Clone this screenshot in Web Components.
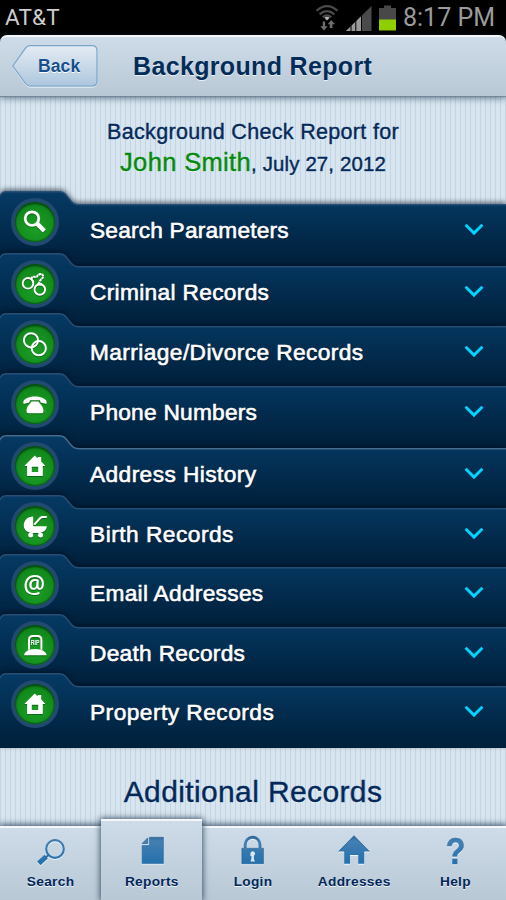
<!DOCTYPE html>
<html lang="en">
<head>
<meta charset="utf-8">
<title>Background Report</title>
<style>
    html, body {
        margin: 0;
        height: 100%;
        background: #000;
        overflow: hidden;
        font-family: "Liberation Sans", Arial, sans-serif;
    }
</style>
</head>
<body>
<report-app></report-app>

<script>
/* icons of the round green badges, 30x30 */
const badgeIcons = {
    search: `<circle cx="12" cy="11.6" r="6.800" fill="none" stroke="#fff" stroke-width="2.800"/>
        <path d="M16.800 16.400 24.300 24" stroke="#fff" stroke-width="4.400"/>`,
    cuffs: `<g transform="translate(0 -2.300)"><g fill="none" stroke="#fff"><circle cx="8" cy="16.600" r="5.300" stroke-width="1.900"/>
        <circle cx="19.800" cy="22.800" r="5.300" stroke-width="1.900"/>
        <path d="M11.300 12.500 C12.500 8 16 11.500 17 9.800 S20.500 6.200 22.800 8.500 C24.600 11.400 19.500 12.400 19 16.800" stroke-width="2.100" stroke-dasharray="2.600 .5"/></g>
        <path d="M11 12.200l3.400 2.200-1.600 2.600zM17.300 16.300h4.600l.6 2.400h-5z" fill="#fff"/></g>`,
    rings: `<g fill="none" stroke="#fff" stroke-width="2"><circle cx="11" cy="11.300" r="7.100"/><circle cx="18.800" cy="19.200" r="7.100"/></g>`,
    phone: `<path fill="#fff" d="M15 7.400c5.500 0 9.600 1.600 11.200 4.200.6 1 .6 2.500.2 3.300l-5.800-1.300c-.4-.8-.3-1.700-.7-2.300H10.100c-.4.6-.3 1.500-.7 2.300l-5.800 1.300c-.4-.8-.4-2.300.2-3.300C5.400 9 9.500 7.400 15 7.400z"/>
        <path fill="#fff" d="M11.400 12.500h7.200c.4 2 4.900 4.200 4.900 9.200 0 1.700-.6 2.500-1.500 2.500H8c-.9 0-1.500-.8-1.500-2.500 0-5 4.500-7.200 4.900-9.200z"/>`,
    home: `<path fill="#fff" fill-rule="evenodd" d="M14.800 4.600 17.700 7.300V5.900h3.500v4.600l3.800 3.900v.6h-2.200v9.900H7.100V15H4.700v-.6zM11.800 15.800v5.200h6.400v-5.200z"/>`,
    pram: `<g fill="#fff"><path d="M13.200 5.500v9.700H26.800c-.1 4.400-4 6.800-9.300 6.800h-4.200c-6 0-9.500-3.200-9.500-7.600 0-5.100 3.800-8.700 9.400-8.900z"/>
        <circle cx="10.700" cy="23.900" r="2.500"/><circle cx="20.500" cy="23.900" r="2.500"/></g>
        <path d="M14.300 13.600 20 7.300q1.300-1.200 3-1.200h3.800" fill="none" stroke="#fff" stroke-width="2"/>`,
    at: `<text x="14.200" y="22.800" text-anchor="middle" fill="#fff" font-size="24.500" font-weight="600" font-family="Open Sans, sans-serif">@</text>`,
    grave: `<path d="M9 19.800V10q0-4 4-4h4.400q4 0 4 4v9.800" fill="none" stroke="#fff" stroke-width="2"/>
        <path fill="#fff" d="M4 25.200c.6-3 3.400-4.800 6.400-5.600q4.600-1.400 9.400 0c3 .8 6.300 2.600 6.900 5.600z"/>
        <text x="15.200" y="15.200" text-anchor="middle" fill="#fff" font-size="6.500" font-weight="bold" font-family="Liberation Sans, sans-serif" textLength="8.800" lengthAdjust="spacingAndGlyphs">RIP</text>`
};

/* icons of the bottom bar, 34x32 */
const navIcons = {
    search: `<circle cx="21" cy="14" r="8.800" fill="none" stroke="url(#blue)" stroke-width="2.200"/>
        <path d="M12.200 21.700 4.800 28.300" stroke="url(#blue)" stroke-width="5"/><path d="M15 19.700 11 23" stroke="#2a6ba3" stroke-width="1.800"/>`,
    reports: `<path fill="url(#blue)" stroke="#225f95" stroke-width=".6" d="M14.500 2.300H28.400V28.600H7.100V10.600H14.500z"/>
        <path fill="#4780af" stroke="#1d527f" stroke-width=".6" d="M12.700 2.900V8.700H7z"/>`,
    login: `<path d="M9.200 13V9.800a7.400 7.600 0 0 1 14.800 0V13" fill="none" stroke="url(#blue)" stroke-width="3"/>
        <path fill="url(#blue)" stroke="#1d527f" stroke-width=".5" d="M5.800 13.300H27.500V28.800H5.800z"/>
        <path fill="#dbe6ef" d="M16.600 16.200a2.500 2.500 0 0 1 1.300 4.600v3.200l1.100 2.500h-4.600l1-2.500v-3h-1v-2.300a2.500 2.500 0 0 1 2.200-2.500z"/>`,
    addresses: `<path fill="url(#blue)" d="M17 .8 32.300 16.400H27.200V28.800H21.200V20H13V28.800H7.200V16.400H1.700z"/>
        <path d="M1.700 16.400 17 .8 32.300 16.400" fill="none" stroke="#225f95" stroke-width=".8"/>`,
    help: `<text x="17.500" y="28.800" text-anchor="middle" fill="url(#blue)" stroke="url(#blue)" stroke-width=".5" font-size="36.500" font-weight="bold" font-family="Liberation Sans, sans-serif" textLength="20" lengthAdjust="spacingAndGlyphs">?</text>`
};

class StatusBar extends HTMLElement {
    constructor(){
        super()
        this.attachShadow({mode: 'open'})
    }

    connectedCallback(){
        this.render();
    }

    style(){
        return /*css*/`
        :host {
            display: flex;
            justify-content: space-between;
            align-items: center;
            height: 35px;
            padding: 0 11px 0 5px;
            box-sizing: border-box;
            background: #000;
            font-family: Roboto, sans-serif;
        }
        .carrier {
            color: #cdcdcd;
            font-size: 22.500px;
            line-height: 35px;
            letter-spacing: .2px;
        }
        .right {
            display: flex;
            align-items: center;
            color: #9b9b9b;
            font-size: 25px;
        }
        svg {
            width: 84px;
            height: 30px;
            margin-right: 4px;
        }
        `
    }

    render(){
        this.shadowRoot.innerHTML = /*html*/`
        <style>${this.style()}</style>
        <span class="carrier">AT&amp;T</span>
        <div class="right">
            <svg viewBox="0 0 84 30">
                <g fill="none" stroke="#4c4c4c" stroke-width="2.200">
                    <path d="M1.500 7.800Q12-1.500 22.500 7.800"/>
                    <path d="M4.600 11.300Q12 5 19.400 11.300"/>
                    <path d="M7.700 14.200Q12 10.500 16.300 14.200"/>
                </g>
                <path d="M12 17.400 9.300 14.800Q12 12.800 14.700 14.800z" fill="#b5b5b5"/>
                <path d="M7.800 18.500v4.700H5.300l3.700 4.300 3.600-4.300h-2.500v-4.700zM14.800 25v-3.800h-2.100l3.500-4.200 3.700 4.200h-2.500V25z" fill="#6f6f6f"/>
                <path d="M31 28 56.500 3V28z" fill="#4a4a4a"/>
                <path d="M31 28 46.200 13.200V28z" fill="#9b9b9b"/>
                <path d="M36 28V20M40.800 28V16M46.500 28V11" stroke="#000" stroke-width="1"/>
                <path d="M64 5h5V2.500h7V5h5v12H64z" fill="#484848"/>
                <path d="M64 16.500h17V27.500H64z" fill="#8fcf00"/>
            </svg>
            <span>8:17 PM</span>
        </div>
        `
    }
}

class TitleBar extends HTMLElement {
    constructor(){
        super()
        this.attachShadow({mode: 'open'})
    }

    connectedCallback(){
        this.render();
    }

    style(){
        return /*css*/`
        :host {
            display: grid;
            grid-template-columns: 86px auto;
            justify-content: start;
            align-items: center;
            column-gap: 35px;
            height: 61px;
            box-sizing: border-box;
            padding-left: 12px;
            border-top: 2px solid #f4f8fb;
            border-radius: 7px 7px 0 0;
            background: linear-gradient(#cddce8, #b9c8d5);
            box-shadow: 0 1px 1px #6f8799, 0 2px 7px rgba(30, 60, 85, .65);
            position: relative;
            z-index: 2;
        }
        .back {
            display: grid;
            height: 43px;
            margin-top: -1px;
        }
        .back svg, .back span {
            grid-area: 1 / 1;
        }
        .back span {
            align-self: center;
            padding-left: 26px;
            color: #174f8c;
            font-size: 17.500px;
            font-weight: bold;
            letter-spacing: .1px;
            text-shadow: 0 1px 0 #fff;
        }
        h1 {
            margin: 0;
            color: #032c59;
            font-size: 25px;
            letter-spacing: .34px;
            line-height: 30px;
            margin-top: -1px;
            text-shadow: 0 1px 0 rgba(255, 255, 255, .7);
        }
        `
    }

    render(){
        this.shadowRoot.innerHTML = /*html*/`
        <style>${this.style()}</style>
        <div class="back">
            <svg width="86" height="43" viewBox="0 0 86 43">
                <defs><linearGradient id="g" x2="0" y2="1"><stop stop-color="#e4ebf3"/><stop offset="1" stop-color="#adc7de"/></linearGradient></defs>
                <path d="M1 22.200 13.500 4.200Q15.500 1.700 18 1.700H80Q85 1.700 85 6.700V37.200Q85 42.200 80 42.200H18Q15.500 42.200 13.500 39.700z" fill="none" stroke="#e9f1f7"/>
                <path d="M.8 21 13.500 3.200Q15.500.7 18 .7H80Q85 .7 85 5.700V36Q85 41 80 41H18Q15.500 41 13.500 38.500z" fill="url(#g)" stroke="#78a5cb" stroke-width="1.200"/>
            </svg>
            <span>Back</span>
        </div>
        <h1><slot></slot></h1>
        `
    }
}

class FolderRow extends HTMLElement {
    constructor(){
        super()
        this.attachShadow({mode: 'open'})
    }

    connectedCallback(){
        this.render();
    }

    style(h){
        return /*css*/`
        :host {
            display: grid;
            height: ${h}px;
            margin-bottom: -13px;
            isolation: isolate;
        }
        :host(:last-of-type) {
            margin-bottom: 0;
        }
        .shape, .content {
            grid-area: 1 / 1;
            min-width: 0;
        }
        .shape {
            width: 506px;
            height: ${h}px;
            filter: drop-shadow(0 -2px 2.5px rgba(0, 12, 30, .55));
        }
        .content {
            display: grid;
            grid-template-columns: 48px 1fr 20px;
            column-gap: 31px;
            padding: 6px 22px 0 11px;
            align-items: start;
            z-index: 1;
        }
        .badge {
            display: grid;
            place-items: center;
            width: 48px;
            height: 48px;
            margin-top: .7px;
            border-radius: 50%;
            background: #224a70;
        }
        .disc {
            display: grid;
            place-items: center;
            width: 40px;
            height: 40px;
            border-radius: 50%;
            background: radial-gradient(circle at 50% 65%, #1b9f25, #0d7d18);
            box-shadow: inset 0 2px 2px #064a14, inset 0 0 1px 1px #075c17;
        }
        .disc svg {
            overflow: visible;
            filter: drop-shadow(0 1px .5px rgba(0, 60, 10, .5));
        }
        .label {
            color: #fff;
            font-size: 22.700px;
            line-height: 26px;
            letter-spacing: ${this.getAttribute('tracking') || .2}px;
            padding-top: 20px;
            -webkit-text-stroke: .6px #fff;
            white-space: nowrap;
            text-shadow: 0 1px 1px #001428;
        }
        .arrow {
            margin-top: 25px;
        }
        `
    }

    render(){
        const h = +this.getAttribute('height');
        const edge = 'M-2 14 V10 Q0 .8 6 .8 H59 Q64 .8 67 5 L71 10 Q74 13.800 79 13.800 H508';
        this.shadowRoot.innerHTML = /*html*/`
        <style>${this.style(h)}</style>
        <svg class="shape" viewBox="0 0 506 ${h}">
            <defs><linearGradient id="g" gradientUnits="userSpaceOnUse" x1="0" y1="0" x2="0" y2="${h}">
                <stop stop-color="#063a64"/><stop offset=".25" stop-color="#04345b"/><stop offset=".8" stop-color="#012442"/><stop offset="1" stop-color="#00203a"/>
            </linearGradient></defs>
            <path d="${edge} V100 H-2z" fill="url(#g)"/>
            <path d="${edge}" fill="none" stroke="${this.getAttribute('line') || '#264f75'}" stroke-width="1.400"/>
        </svg>
        <div class="content">
            <div class="badge"><div class="disc">
                <svg width="30" height="30" viewBox="0 0 30 30">${badgeIcons[this.getAttribute('icon')]}</svg>
            </div></div>
            <span class="label"><slot></slot></span>
            <svg class="arrow" width="20" height="14" viewBox="0 0 20 14"><path d="M1.600 2.800 10 11.100 18.400 2.800" fill="none" stroke="#00d4ff" stroke-width="2.900"/></svg>
        </div>
        `
    }
}

class NavTab extends HTMLElement {
    constructor(){
        super()
        this.attachShadow({mode: 'open'})
    }

    connectedCallback(){
        this.render();
    }

    style(){
        return /*css*/`
        :host {
            display: flex;
            flex-direction: column;
            align-items: center;
            justify-content: flex-end;
            flex: 1 1 0;
            height: 72px;
            box-sizing: border-box;
            padding-bottom: 10px;
            color: #02285a;
        }
        :host([active]) {
            height: 81px;
            border-top: 2px solid #f4f8fb;
            background: linear-gradient(#cddce8, #b9c8d5);
            box-shadow: 0 0 6px 1px rgba(20, 45, 70, .75);
        }
        svg {
            filter: drop-shadow(0 1px 0 #eef4f9);
            overflow: visible;
        }
        span {
            font-size: 13.700px;
            font-weight: bold;
            letter-spacing: .3px;
            line-height: 16px;
            margin-top: 7px;
            text-shadow: 0 1px 0 #eef4f9;
        }
        `
    }

    render(){
        this.shadowRoot.innerHTML = /*html*/`
        <style>${this.style()}</style>
        <svg width="34" height="32" viewBox="0 0 34 32">
            <defs><linearGradient id="blue" gradientUnits="userSpaceOnUse" x1="0" y1="0" x2="0" y2="30">
                <stop stop-color="#2b5f91"/><stop offset=".2" stop-color="#447fb1"/><stop offset="1" stop-color="#2270ad"/>
            </linearGradient></defs>
            ${navIcons[this.getAttribute('icon')]}
        </svg>
        <span><slot></slot></span>
        `
    }
}

class BottomNav extends HTMLElement {
    constructor(){
        super()
        this.attachShadow({mode: 'open'})
    }

    connectedCallback(){
        this.render();
    }

    style(){
        return /*css*/`
        :host {
            display: flex;
            align-items: flex-end;
            height: 74px;
            box-sizing: border-box;
            border-top: 2px solid #f4f8fb;
            background: linear-gradient(#cddce8, #b9c8d5);
            box-shadow: 0 -1px 6px 1px rgba(20, 45, 70, .7);
        }
        `
    }

    render(){
        this.shadowRoot.innerHTML = /*html*/`
        <style>${this.style()}</style>
        <slot></slot>
        `
    }
}

class ReportApp extends HTMLElement {
    constructor(){
        super()
        this.attachShadow({mode: 'open'})
    }

    connectedCallback(){
        this.render();
    }

    style(){
        return /*css*/`
        :host {
            display: flex;
            flex-direction: column;
            width: 506px;
            height: 900px;
            overflow: hidden;
        }
        main {
            flex: 1;
            min-height: 0;
            color: #03295a;
            text-align: center;
            background: repeating-linear-gradient(90deg, #c5d4e0 0 1px, #d7e5f0 1px 5px);
        }
        .intro {
            height: 95px;
            box-sizing: border-box;
            padding-top: 21px;
            text-shadow: 0 1px 0 #eef5fa;
            -webkit-text-stroke: .4px;
        }
        .intro p {
            margin: 0;
            font-size: 21.500px;
            line-height: 30px;
            letter-spacing: .32px;
            white-space: nowrap;
        }
        .intro p + p {
            font-size: 20.400px;
            letter-spacing: .15px;
        }
        .intro b {
            font-weight: normal;
            font-size: 25.500px;
            letter-spacing: .35px;
            color: #068a0c;
        }
        .list {
            text-align: left;
        }
        h2 {
            margin: 0;
            padding-top: 26px;
            font-size: 30px;
            font-weight: normal;
            line-height: 36px;
            letter-spacing: .38px;
            -webkit-text-stroke: .4px;
            text-shadow: 0 1px 0 #eef5fa;
        }
        bottom-nav {
            position: relative;
        }
        `
    }

    render(){
        this.shadowRoot.innerHTML = /*html*/`
        <style>${this.style()}</style>
        <status-bar></status-bar>
        <title-bar>Background Report</title-bar>
        <main>
            <div class="intro">
                <p>Background Check Report for</p>
                <p><b>John Smith</b>, July 27, 2012</p>
            </div>
            <div class="list">
                <folder-row icon="search" height="75">Search Parameters</folder-row>
                <folder-row icon="cuffs" height="73" tracking=".33">Criminal Records</folder-row>
                <folder-row icon="rings" height="73" tracking=".42">Marriage/Divorce Records</folder-row>
                <folder-row icon="phone" height="75" tracking=".25">Phone Numbers</folder-row>
                <folder-row icon="home" height="73" tracking=".42" line="#466b8c">Address History</folder-row>
                <folder-row icon="pram" height="72" tracking=".5">Birth Records</folder-row>
                <folder-row icon="at" height="73" tracking=".3">Email Addresses</folder-row>
                <folder-row icon="grave" height="72" tracking=".3">Death Records</folder-row>
                <folder-row icon="home" height="75" tracking=".48">Property Records</folder-row>
            </div>
            <h2>Additional Records</h2>
        </main>
        <bottom-nav>
            <nav-tab icon="search">Search</nav-tab>
            <nav-tab icon="reports" active>Reports</nav-tab>
            <nav-tab icon="login">Login</nav-tab>
            <nav-tab icon="addresses">Addresses</nav-tab>
            <nav-tab icon="help">Help</nav-tab>
        </bottom-nav>
        `
    }
}

customElements.define('status-bar', StatusBar);
customElements.define('title-bar', TitleBar);
customElements.define('folder-row', FolderRow);
customElements.define('nav-tab', NavTab);
customElements.define('bottom-nav', BottomNav);
customElements.define('report-app', ReportApp);
</script>
</body>
</html>
